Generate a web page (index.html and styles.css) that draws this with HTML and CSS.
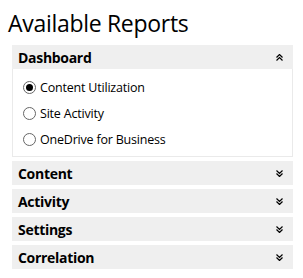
FILE: index.html
```html
<!DOCTYPE html>
<html lang="en">
<head>
  <meta charset="UTF-8">
  <title>Available Reports</title>
  <link rel="stylesheet" href="styles.css">
</head>
<body>
  <h1 class="page-title">Available Reports</h1>

  <div class="report-list">
    <!-- Dashboard (open) -->
    <div class="report-group open">
      <div class="group-header">
        <span class="group-title">Dashboard</span>
        <svg class="chevron" width="7" height="7" viewBox="0 0 7 7">
          <path d="M0.5 3.5 L3.5 0.5 L6.5 3.5 M0.5 6.5 L3.5 3.5 L6.5 6.5" fill="none" stroke="#000" stroke-width="1.2"/>
        </svg>
      </div>
      <div class="group-body">
        <label class="report-option">
          <span class="radio checked"></span>Content Utilization
        </label>
        <label class="report-option">
          <span class="radio"></span>Site Activity
        </label>
        <label class="report-option">
          <span class="radio"></span>OneDrive for Business
        </label>
      </div>
    </div>

    <div class="report-group">
      <div class="group-header">
        <span class="group-title">Content</span>
        <svg class="chevron" width="7" height="7" viewBox="0 0 7 7">
          <path d="M0.5 0.5 L3.5 3.5 L6.5 0.5 M0.5 3.5 L3.5 6.5 L6.5 3.5" fill="none" stroke="#000" stroke-width="1.2"/>
        </svg>
      </div>
    </div>

    <div class="report-group">
      <div class="group-header">
        <span class="group-title">Activity</span>
        <svg class="chevron" width="7" height="7" viewBox="0 0 7 7">
          <path d="M0.5 0.5 L3.5 3.5 L6.5 0.5 M0.5 3.5 L3.5 6.5 L6.5 3.5" fill="none" stroke="#000" stroke-width="1.2"/>
        </svg>
      </div>
    </div>

    <div class="report-group">
      <div class="group-header">
        <span class="group-title">Settings</span>
        <svg class="chevron" width="7" height="7" viewBox="0 0 7 7">
          <path d="M0.5 0.5 L3.5 3.5 L6.5 0.5 M0.5 3.5 L3.5 6.5 L6.5 3.5" fill="none" stroke="#000" stroke-width="1.2"/>
        </svg>
      </div>
    </div>

    <div class="report-group">
      <div class="group-header">
        <span class="group-title">Correlation</span>
        <svg class="chevron" width="7" height="7" viewBox="0 0 7 7">
          <path d="M0.5 0.5 L3.5 3.5 L6.5 0.5 M0.5 3.5 L3.5 6.5 L6.5 3.5" fill="none" stroke="#000" stroke-width="1.2"/>
        </svg>
      </div>
    </div>
  </div>
</body>
</html>
```

FILE: styles.css
```css
body {
  margin: 0;
  background: #fff;
  color: #000;
  font-family: 'Open Sans', 'Noto Sans', sans-serif;
}

/* Title */
.page-title {
  margin: 6px 0 0 8px;
  font-size: 23px;
  font-weight: 400;
  line-height: 34px;
  letter-spacing: -0.3px;
}

/* Accordion */
.report-list {
  margin: 5px 10px 0 12px;
  display: flex;
  flex-direction: column;
  gap: 4px;
}

.group-header {
  height: 24px;
  background: #efefef;
  display: flex;
  align-items: center;
  justify-content: space-between;
  padding: 0 10px 0 6px;
}

.group-title {
  font-size: 14px;
  font-weight: 700;
  letter-spacing: -0.3px;
}

.chevron {
  display: block;
}

.group-body {
  border: 1px solid #eaeaea;
  border-top: none;
  height: 88px;
  box-sizing: border-box;
  padding: 5px 0 0 10px;
}

.report-option {
  display: flex;
  align-items: center;
  height: 26px;
  font-size: 12.5px;
  letter-spacing: -0.2px;
}

.radio {
  width: 11px;
  height: 11px;
  border: 1px solid #666;
  border-radius: 50%;
  margin-right: 4px;
  display: flex;
  align-items: center;
  justify-content: center;
}

.radio.checked::after {
  content: '';
  width: 7px;
  height: 7px;
  border-radius: 50%;
  background: #000;
}
```
